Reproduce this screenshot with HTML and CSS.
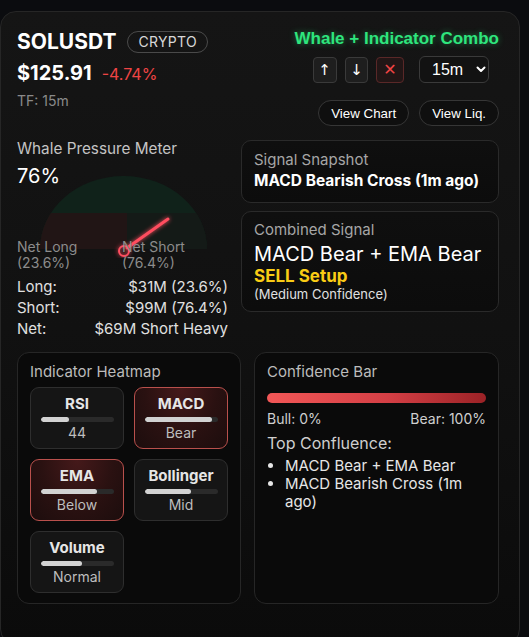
FILE: index.html
```html
<!DOCTYPE html>
<html>
<head>
<meta charset="utf-8">
<link rel="stylesheet" href="styles.css">
</head>
<body>
<div class="card">
  <div class="header">
    <div class="h-left">
      <div class="sym-row">
        <span class="sym">SOLUSDT</span>
        <span class="pill">CRYPTO</span>
      </div>
      <div class="price-row">
        <span class="price">$125.91</span>
        <span class="chg">-4.74%</span>
      </div>
      <div class="tf">TF: 15m</div>
    </div>
    <div class="h-right">
      <div class="combo">Whale + Indicator Combo</div>
      <div class="ctrls">
        <button class="ib ib-up">↑</button>
        <button class="ib">↓</button>
        <button class="ib ib-x">✕</button>
        <div class="select">15m
          <svg class="chev" width="10" height="7" viewBox="0 0 10 7"><path d="M1.5 1.5 L5 5 L8.5 1.5" fill="none" stroke="#fff" stroke-width="2" stroke-linecap="round" stroke-linejoin="round"/></svg>
        </div>
      </div>
      <div class="links">
        <button class="lnk">View Chart</button>
        <button class="lnk">View Liq.</button>
      </div>
    </div>
  </div>

  <div class="mid">
    <div class="meter">
      <div class="m-title">Whale Pressure Meter</div>
      <div class="m-val">76%</div>
      <svg class="gauge" width="211" height="92" viewBox="0 0 211 92">
        <defs>
          <clipPath id="dome"><path d="M23 83 A83.5 73 0 0 1 190 83 Z"/></clipPath>
          <filter id="glow" x="-50%" y="-50%" width="200%" height="200%">
            <feGaussianBlur stdDeviation="2" result="b"/>
            <feMerge><feMergeNode in="b"/><feMergeNode in="SourceGraphic"/></feMerge>
          </filter>
        </defs>
        <path d="M23 83 A83.5 73 0 0 1 190 83 Z" fill="#10221a"/>
        <g clip-path="url(#dome)">
          <rect x="0" y="47" width="110" height="40" fill="#211515"/>
          <rect x="110" y="47" width="100" height="40" fill="#141a17"/>
        </g>
        <g filter="url(#glow)">
          <line x1="110" y1="82" x2="151" y2="53" stroke="#ff4d5e" stroke-width="3" stroke-linecap="round"/>
          <circle cx="107" cy="85" r="5" fill="none" stroke="#ff4d5e" stroke-width="2"/>
        </g>
      </svg>
      <div class="nets">
        <div class="net net-l">Net Long<br>(23.6%)</div>
        <div class="net">Net Short<br>(76.4%)</div>
      </div>
      <div class="rows">
        <div class="row"><span>Long:</span><span>$31M (23.6%)</span></div>
        <div class="row"><span>Short:</span><span>$99M (76.4%)</span></div>
        <div class="row"><span>Net:</span><span>$69M Short Heavy</span></div>
      </div>
    </div>
    <div class="signals">
      <div class="box snap">
        <div class="b-title">Signal Snapshot</div>
        <div class="b-strong">MACD Bearish Cross (1m ago)</div>
      </div>
      <div class="box comb">
        <div class="b-title">Combined Signal</div>
        <div class="b-big">MACD Bear + EMA Bear</div>
        <div class="b-sell">SELL Setup</div>
        <div class="b-small">(Medium Confidence)</div>
      </div>
    </div>
  </div>

  <div class="bottom">
    <div class="panel">
      <div class="p-title">Indicator Heatmap</div>
      <div class="tiles">
        <div class="tile">
          <div class="t-name">RSI</div>
          <div class="track"><div class="fill" style="width:39%"></div></div>
          <div class="t-val">44</div>
        </div>
        <div class="tile hot">
          <div class="t-name">MACD</div>
          <div class="track"><div class="fill" style="width:93%"></div></div>
          <div class="t-val">Bear</div>
        </div>
        <div class="tile hot">
          <div class="t-name">EMA</div>
          <div class="track"><div class="fill" style="width:78%"></div></div>
          <div class="t-val">Below</div>
        </div>
        <div class="tile">
          <div class="t-name">Bollinger</div>
          <div class="track"><div class="fill" style="width:64%"></div></div>
          <div class="t-val">Mid</div>
        </div>
        <div class="tile">
          <div class="t-name">Volume</div>
          <div class="track"><div class="fill" style="width:57%"></div></div>
          <div class="t-val">Normal</div>
        </div>
      </div>
    </div>
    <div class="panel">
      <div class="p-title">Confidence Bar</div>
      <div class="cbar"></div>
      <div class="c-legend"><span>Bull: 0%</span><span>Bear: 100%</span></div>
      <div class="c-sub">Top Confluence:</div>
      <ul class="c-list">
        <li>MACD Bear + EMA Bear</li>
        <li>MACD Bearish Cross (1m ago)</li>
      </ul>
    </div>
  </div>
</div>
</body>
</html>
```

FILE: styles.css
```css
html, body {
  margin: 0;
  padding: 0;
  background: #0b0c0f;
}
body {
  font-family: Inter, "Noto Sans", sans-serif;
  color: #e8e8e8;
}
.card {
  box-sizing: border-box;
  width: 520px;
  margin-top: 11px;
  padding: 16px 20px 40px 16px;
  border: 1px solid #262626;
  border-radius: 16px;
  background: linear-gradient(180deg, #151515 0%, #111111 50%, #0b0b0b 100%);
}
.header {
  display: flex;
  justify-content: space-between;
  height: 99px;
}
.sym-row {
  display: flex;
  align-items: center;
  gap: 11px;
  height: 26px;
  margin-top: 1px;
}
.sym {
  font-size: 21px;
  font-weight: 700;
  color: #ffffff;
  line-height: 26px;
}
.pill {
  box-sizing: border-box;
  height: 22px;
  padding: 0 10px;
  border: 1px solid #4a4a4a;
  border-radius: 11px;
  font-size: 14px;
  line-height: 20px;
  color: #d8d8d8;
  letter-spacing: 0.3px;
}
.price-row {
  display: flex;
  align-items: baseline;
  gap: 10px;
  margin-top: 6px;
  line-height: 24px;
}
.price {
  font-size: 20px;
  font-weight: 700;
  color: #ffffff;
}
.chg {
  font-size: 16px;
  color: #ef4444;
}
.tf {
  margin-top: 6px;
  font-size: 14px;
  line-height: 17px;
  color: #8a8a8a;
}
.h-right {
  display: flex;
  flex-direction: column;
  align-items: flex-end;
}
.combo {
  font-family: "Liberation Sans", Arial, sans-serif;
  font-weight: 700;
  font-size: 17px;
  line-height: 20px;
  margin-top: 1px;
  color: #2ee57d;
  text-shadow: 0 0 6px rgba(46, 229, 125, 0.45);
}
.ctrls {
  display: flex;
  align-items: center;
  margin-top: 7px;
  margin-right: 10px;
}
.ib {
  box-sizing: border-box;
  height: 26px;
  width: 23px;
  padding: 0;
  margin-right: 8px;
  border: 1px solid #3a3a3a;
  border-radius: 4px;
  background: #1e1e1e;
  color: #ffffff;
  font-family: "DejaVu Sans", sans-serif;
  font-size: 15px;
  line-height: 24px;
}
.ib-up {
  width: 24px;
  margin-right: 8.5px;
}
.ib-x {
  width: 28px;
  margin-right: 15px;
  border-color: #5a2828;
  background: #221616;
  color: #ef4444;
  font-size: 16px;
}
.select {
  box-sizing: border-box;
  display: flex;
  align-items: center;
  height: 27px;
  width: 70px;
  padding: 0 0 0 12px;
  border: 1px solid #3a3a3a;
  border-radius: 6px;
  background: #121212;
  font-family: "Liberation Sans", Arial, sans-serif;
  font-size: 16px;
  color: #ffffff;
}
.chev {
  margin-left: 13px;
}
.links {
  display: flex;
  gap: 10px;
  margin-top: 17px;
}
.lnk {
  box-sizing: border-box;
  height: 26px;
  padding: 0 12px;
  border: 1px solid #363636;
  border-radius: 13px;
  background: #0f0f0f;
  color: #ffffff;
  font-family: "Liberation Sans", Arial, sans-serif;
  font-size: 13.33px;
}

.mid {
  display: grid;
  grid-template-columns: 211px 1fr;
  gap: 13px;
  margin-top: 13px;
}
.m-title {
  font-size: 15.3px;
  line-height: 18px;
  color: #c4c4c4;
}
.m-val {
  margin-top: 6px;
  font-size: 20px;
  line-height: 24px;
  color: #ffffff;
}
.gauge {
  display: block;
  margin-top: -22px;
}
.nets {
  display: flex;
  margin-top: -19px;
  position: relative;
}
.net {
  font-size: 14px;
  line-height: 16px;
  color: #8c8c8c;
}
.net-l {
  width: 105px;
}
.rows {
  margin-top: 5px;
}
.row {
  display: flex;
  justify-content: space-between;
  font-size: 15px;
  line-height: 21px;
  color: #e0e0e0;
}
.signals {
  display: flex;
  flex-direction: column;
  gap: 8px;
}
.box {
  border: 1px solid #2a2a2a;
  border-radius: 10px;
  background: linear-gradient(180deg, #0f0f0f, #0c0c0c);
  padding: 10px 12px 11px;
}
.comb {
  padding: 9px 12px 9px;
}
.b-title {
  font-size: 15px;
  line-height: 18px;
  color: #a6a6a6;
}
.b-strong {
  margin-top: 2px;
  font-size: 15.5px;
  font-weight: 700;
  line-height: 20px;
  color: #ffffff;
}
.b-big {
  margin-top: 3px;
  font-size: 20px;
  line-height: 24px;
  color: #ffffff;
}
.b-sell {
  font-size: 17px;
  font-weight: 700;
  line-height: 20px;
  color: #facc15;
}
.b-small {
  font-size: 13px;
  line-height: 16px;
  color: #e0e0e0;
}

.bottom {
  display: grid;
  grid-template-columns: 224px 1fr;
  gap: 13px;
  margin-top: 13px;
}
.panel {
  border: 1px solid #262626;
  border-radius: 12px;
  background: #0a0a0a;
  padding: 10px 12px 10px;
  height: 252px;
  box-sizing: border-box;
}
.p-title {
  font-size: 15px;
  line-height: 18px;
  color: #bcbcbc;
}
.tiles {
  display: grid;
  grid-template-columns: 1fr 1fr;
  column-gap: 10px;
  row-gap: 10px;
  margin-top: 6px;
}
.tile {
  box-sizing: border-box;
  height: 62px;
  padding: 7px 6px 8px;
  border: 1px solid #2e2e2e;
  border-radius: 9px;
  background: #151515;
  text-align: center;
}
.tile.hot {
  border-color: #b9504c;
  background: radial-gradient(ellipse at 50% 0%, #45191a 0%, #2a1111 55%, #1c0d0d 100%);
}
.t-name {
  font-size: 15px;
  font-weight: 700;
  line-height: 18px;
  color: #e6e6e6;
}
.track {
  width: 73px;
  height: 5px;
  margin: 4px auto 3px;
  border-radius: 3px;
  background: #2a2a2a;
  overflow: hidden;
}
.fill {
  height: 100%;
  border-radius: 3px;
  background: #d2d2d2;
}
.t-val {
  font-size: 14px;
  line-height: 16px;
  color: #bdbdbd;
}
.cbar {
  height: 10px;
  margin-top: 12px;
  border-radius: 5px;
  background: linear-gradient(90deg, #f25757, #d43f45 55%, #9b2226);
}
.c-legend {
  display: flex;
  justify-content: space-between;
  margin-top: 7px;
  font-size: 14px;
  line-height: 17px;
  color: #cfcfcf;
}
.c-sub {
  margin-top: 7px;
  font-size: 16px;
  line-height: 19px;
  color: #cfcfcf;
}
.c-list {
  margin: 4px 0 0;
  padding-left: 18px;
  font-size: 15px;
  line-height: 18px;
  color: #e6e6e6;
}
```
